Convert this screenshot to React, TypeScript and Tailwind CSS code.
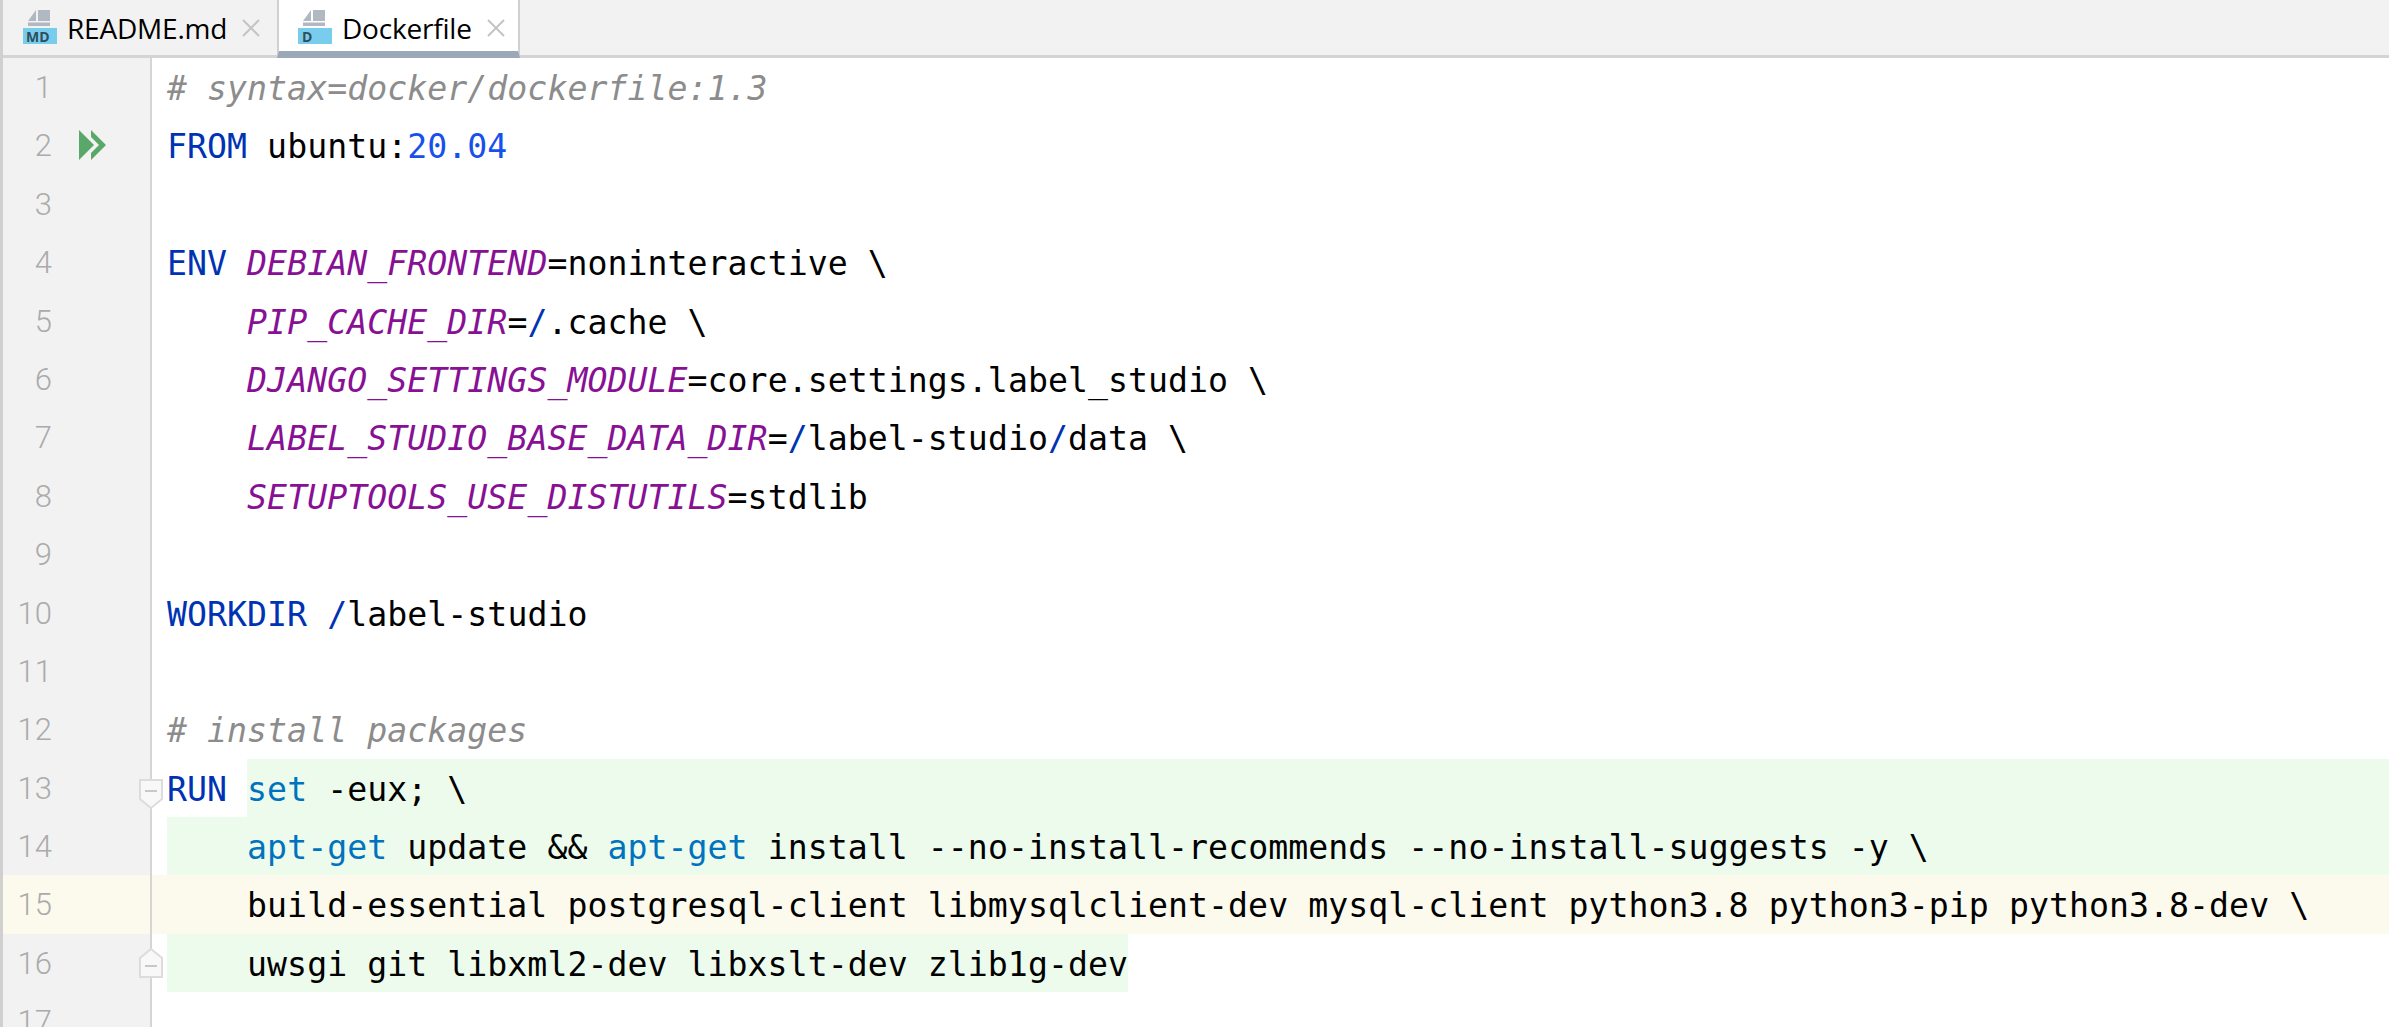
import type { ReactNode } from "react";

const KW = "text-[#0033b3]";
const VAR = "italic text-[#871094]";
const NUM = "text-[#1750eb]";
const CMD = "text-[#0073bf]";
const SL = "text-[#0033b3]";
const CM = "italic text-[#8c8c8c]";

function FileIcon({ label }: { label: string }) {
  return (
    <svg width="34" height="34" viewBox="0 0 34 34" className="shrink-0">
      <path d="M15 0H27V11H15Z" fill="#b0b9c1" />
      <path d="M13 0V11H5Z" fill="#b0b9c1" />
      <path d="M5 12.5H27V16H5Z" fill="#b0b9c1" />
      <rect x="0" y="18" width="34" height="16" fill="#79cdec" />
      <text x={label.length > 1 ? 3 : 4} y="32" fontSize="14" fontWeight="700" fill="#2f4f60" fontFamily="'Open Sans', sans-serif">
        {label}
      </text>
    </svg>
  );
}

function Close() {
  return (
    <svg width="18" height="18" viewBox="0 0 18 18" className="shrink-0">
      <path d="M1 1L17 17M17 1L1 17" stroke="#c4c4c4" strokeWidth="2" fill="none" />
    </svg>
  );
}

function Tab({ label, icon, active }: { label: string; icon: string; active?: boolean }) {
  return (
    <div
      className={
        active
          ? "flex items-start h-[58px] w-[243px] pl-[19px] pt-[10px] bg-white border-x-2 border-l-[#d0d0d0] border-r-[#d0d0d0] border-b-[7px] border-b-[#9ca7b8]"
          : "flex items-start h-[58px] w-[274px] pl-[20px] pt-[10px]"
      }
    >
      <FileIcon label={icon} />
      <span className="ml-[10px] text-[28px] leading-[36px] text-black font-['Open_Sans',sans-serif] tracking-[-0.2px]">
        {label}
      </span>
      <span className="ml-[15px] mt-[9px]">
        <Close />
      </span>
    </div>
  );
}

function FoldStart() {
  return (
    <svg width="24" height="30" viewBox="0 0 24 30" className="absolute left-[136px] top-[20px]">
      <path d="M1 1H23V20L12 29L1 20Z" fill="#f8f8f8" stroke="#dcdcdc" strokeWidth="2" />
      <path d="M6 12H18" stroke="#c8c8c8" strokeWidth="2" />
    </svg>
  );
}

function FoldEnd() {
  return (
    <svg width="24" height="30" viewBox="0 0 24 30" className="absolute left-[136px] top-[14px]">
      <path d="M1 29H23V10L12 1L1 10Z" fill="#f8f8f8" stroke="#dcdcdc" strokeWidth="2" />
      <path d="M6 18H18" stroke="#c8c8c8" strokeWidth="2" />
    </svg>
  );
}

function RunIcon() {
  return (
    <svg width="27" height="30" viewBox="0 0 27 30" className="absolute left-[76px] top-[14px]">
      <path d="M0 0L15 15L0 30Z" fill="#59a869" />
      <path d="M12 0L27 15L12 30V23L20 15L12 7Z" fill="#59a869" />
    </svg>
  );
}

type RowProps = {
  n: number;
  children?: ReactNode;
  current?: boolean;
  overlay?: ReactNode;
};

function Row({ n, children, current, overlay }: RowProps) {
  return (
    <div className={current ? "relative flex h-[58.4px] bg-[#fcfaed]" : "relative flex h-[58.4px]"}>
      <div
        className={
          current
            ? "w-[149px] shrink-0 border-r-2 border-[#d5d5d5] pr-[98px] text-right text-[#ababab] text-[31px] leading-[60px] font-['Roboto',sans-serif] font-light"
            : "w-[149px] shrink-0 border-r-2 border-[#d5d5d5] bg-[#f2f2f2] pr-[98px] text-right text-[#ababab] text-[31px] leading-[60px] font-['Roboto',sans-serif] font-light"
        }
      >
        {n}
      </div>
      <div className="flex-1 min-w-0 flex pl-[15px] text-[33.2px] tracking-[0.04px] leading-[62.4px] text-black whitespace-pre font-['DejaVu_Sans_Mono',monospace]">
        {children}
      </div>
      {overlay}
    </div>
  );
}

export default function App() {
  return (
    <div className="h-screen w-full overflow-hidden bg-white flex flex-col border-l-[3px] border-[#d0d0d0]">
      <div className="flex shrink-0 h-[58px] bg-[#f2f2f2] shadow-[inset_0_-3px_0_#d4d4d4]">
        <Tab label="README.md" icon="MD" />
        <Tab label="Dockerfile" icon="D" active />
      </div>
      <div className="flex-1 min-h-0">
        <Row n={1}>
          <span className={CM}># syntax=docker/dockerfile:1.3</span>
        </Row>
        <Row n={2} overlay={<RunIcon />}>
          <span><span className={KW}>FROM</span> ubuntu:<span className={NUM}>20.04</span></span>
        </Row>
        <Row n={3} />
        <Row n={4}>
          <span><span className={KW}>ENV</span> <span className={VAR}>DEBIAN_FRONTEND</span>=noninteractive \</span>
        </Row>
        <Row n={5}>
          <span>    <span className={VAR}>PIP_CACHE_DIR</span>=<span className={SL}>/</span>.cache \</span>
        </Row>
        <Row n={6}>
          <span>    <span className={VAR}>DJANGO_SETTINGS_MODULE</span>=core.settings.label_studio \</span>
        </Row>
        <Row n={7}>
          <span>    <span className={VAR}>LABEL_STUDIO_BASE_DATA_DIR</span>=<span className={SL}>/</span>label-studio<span className={SL}>/</span>data \</span>
        </Row>
        <Row n={8}>
          <span>    <span className={VAR}>SETUPTOOLS_USE_DISTUTILS</span>=stdlib</span>
        </Row>
        <Row n={9} />
        <Row n={10}>
          <span><span className={KW}>WORKDIR</span> <span className={SL}>/</span>label-studio</span>
        </Row>
        <Row n={11} />
        <Row n={12}>
          <span className={CM}># install packages</span>
        </Row>
        <Row n={13} overlay={<FoldStart />}>
          <span className={KW}>RUN </span>
          <span className="flex-1 bg-[#edfbed]"><span className={CMD}>set</span> -eux; \</span>
        </Row>
        <Row n={14}>
          <span className="flex-1 bg-[#edfbed]">    <span className={CMD}>apt-get</span> update &amp;&amp; <span className={CMD}>apt-get</span> install --no-install-recommends --no-install-suggests -y \</span>
        </Row>
        <Row n={15} current>
          <span>    build-essential postgresql-client libmysqlclient-dev mysql-client python3.8 python3-pip python3.8-dev \</span>
        </Row>
        <Row n={16} overlay={<FoldEnd />}>
          <span className="bg-[#edfbed]">    uwsgi git libxml2-dev libxslt-dev zlib1g-dev</span>
        </Row>
        <Row n={17} />
      </div>
    </div>
  );
}
